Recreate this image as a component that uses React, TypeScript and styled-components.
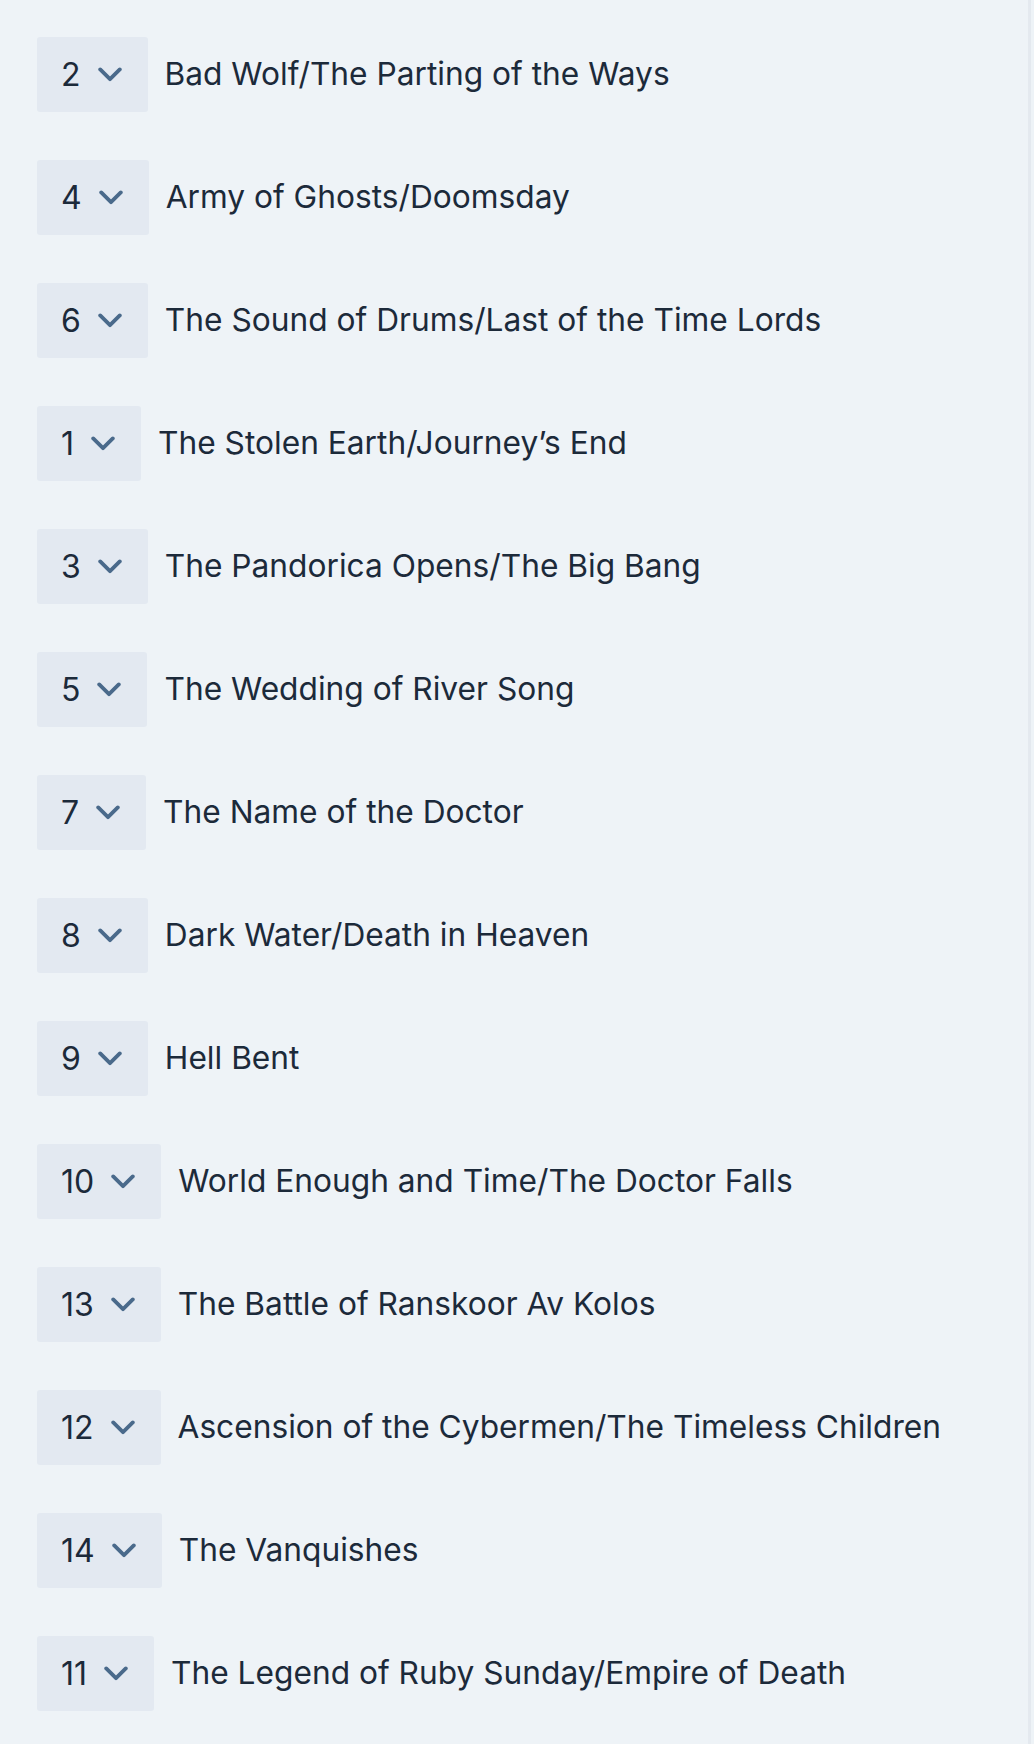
import React from "react";
import styled, { createGlobalStyle } from "styled-components";

const GlobalStyle = createGlobalStyle`
  html, body {
    margin: 0;
    padding: 0;
    background: #eef3f7;
  }
  body {
    font-family: Inter, "Noto Sans", "Liberation Sans", sans-serif;
    color: #1c2a3a;
  }
  * { box-sizing: border-box; }
`;

const Page = styled.div`
  width: 1031px;
  min-height: 1744px;
  border-right: 3px solid #e4e9ef;
  padding: 37px 0 0 37px;
`;

const List = styled.ol`
  list-style: none;
  margin: 0;
  padding: 0;
  display: flex;
  flex-direction: column;
  gap: 48px;
`;

const Row = styled.li`
  display: flex;
  align-items: center;
  gap: 17px;
`;

const RankButton = styled.button`
  display: flex;
  align-items: center;
  height: 75px;
  padding: 0 26px 0 24px;
  gap: 17px;
  border: none;
  border-radius: 3px;
  background: #e3e9f1;
  font-family: Inter, "Noto Sans", "Liberation Sans", sans-serif;
  font-size: 32px;
  color: #1c2a3a;
  cursor: pointer;
`;

const Num = styled.span`
  line-height: 1;
`;

const Title = styled.span`
  font-size: 31.7px;
  line-height: 1.2;
  color: #1c2a3a;
`;

const Chevron = () => (
  <svg width="24" height="15" viewBox="0 0 24 15" fill="none" aria-hidden="true">
    <polyline
      points="2.2,2.4 12,12.2 21.8,2.4"
      stroke="#4a6a8b"
      strokeWidth="3.8"
      strokeLinecap="round"
      strokeLinejoin="round"
    />
  </svg>
);

const episodes: [number, string][] = [
  [2, "Bad Wolf/The Parting of the Ways"],
  [4, "Army of Ghosts/Doomsday"],
  [6, "The Sound of Drums/Last of the Time Lords"],
  [1, "The Stolen Earth/Journey\u2019s End"],
  [3, "The Pandorica Opens/The Big Bang"],
  [5, "The Wedding of River Song"],
  [7, "The Name of the Doctor"],
  [8, "Dark Water/Death in Heaven"],
  [9, "Hell Bent"],
  [10, "World Enough and Time/The Doctor Falls"],
  [13, "The Battle of Ranskoor Av Kolos"],
  [12, "Ascension of the Cybermen/The Timeless Children"],
  [14, "The Vanquishes"],
  [11, "The Legend of Ruby Sunday/Empire of Death"],
];

export default function App() {
  return (
    <>
      <GlobalStyle />
      <Page>
        <List>
          {episodes.map(([rank, title]) => (
            <Row key={title}>
              <RankButton type="button">
                <Num>{rank}</Num>
                <Chevron />
              </RankButton>
              <Title>{title}</Title>
            </Row>
          ))}
        </List>
      </Page>
    </>
  );
}
